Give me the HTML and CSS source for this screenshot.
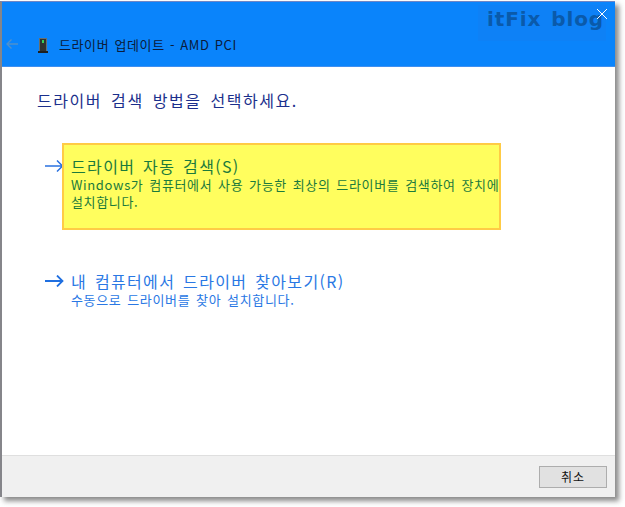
FILE: index.html
```html
<!DOCTYPE html>
<html lang="ko">
<head>
<meta charset="utf-8">
<title>드라이버 업데이트</title>
<link rel="stylesheet" href="styles.css">
</head>
<body>
<div class="window">
  <header class="titlebar">
    <svg class="back" width="12" height="10" viewBox="0 0 12 10"><path d="M12 5H1M5.500 .5 1 5l4.500 4.500" fill="none" stroke="#4f90cc" stroke-width="1.400"/></svg>
    <svg class="device" width="10" height="15" viewBox="0 0 10 15"><rect x="1" y="0" width="8" height="13" fill="#6a6f6c"/><rect x="2" y="1" width="6" height="12" fill="#2f3331"/><rect x="4" y="2" width="2" height="3" fill="#35d05a"/><rect x="0" y="13" width="10" height="2" fill="#1d1f1e"/></svg>
    <span class="title">드라이버 업데이트 - AMD PCI</span>
  </header>
  <div class="watermark"><span class="wm-text">itFix blog</span></div>
  <svg class="close" width="12" height="12" viewBox="0 0 12 12"><path d="M1 1l10 10M11 1 1 11" stroke="#fff" stroke-width="1"/></svg>
  <main class="content">
    <h1 class="heading">드라이버 검색 방법을 선택하세요.</h1>
    <div class="option option-first">
      <svg class="arrow" width="19" height="12" viewBox="0 0 19 12"><path d="M0 6h17.500M12 .5 17.500 6 12 11.500" fill="none" stroke="#2a72e0" stroke-width="1.500"/></svg>
      <div class="highlight">
        <div class="opt-title green">드라이버 자동 검색(S)</div>
        <div class="opt-desc green">Windows가 컴퓨터에서 사용 가능한 최상의 드라이버를 검색하여 장치에<br>설치합니다.</div>
      </div>
    </div>
    <div class="option option-second">
      <svg class="arrow" width="19" height="12" viewBox="0 0 19 12"><path d="M0 6h17.500M12 .5 17.500 6 12 11.500" fill="none" stroke="#1f6fe0" stroke-width="1.800"/></svg>
      <div class="plain">
        <div class="opt-title blue">내 컴퓨터에서 드라이버 찾아보기(R)</div>
        <div class="opt-desc blue">수동으로 드라이버를 찾아 설치합니다.</div>
      </div>
    </div>
  </main>
  <footer class="footer">
    <button class="cancel" type="button">취소</button>
  </footer>
</div>
</body>
</html>
```

FILE: styles.css
```css
* { box-sizing: border-box; }
html, body { margin: 0; padding: 0; background: #fff; }
body {
  width: 625px;
  height: 507px;
  overflow: hidden;
  font-family: "Noto Sans CJK KR", "Noto Sans", sans-serif;
}
.window {
  position: relative;
  width: 615px;
  height: 496px;
  margin-top: 1px;
  display: flex;
  flex-direction: column;
  background: #fff;
  border-left: 2px solid #85858a;
  border-top: 1px solid #6f86c4;
  box-shadow: 4px 4px 5px rgba(60, 60, 60, .6);
}
.titlebar {
  height: 65px;
  flex: none;
  display: flex;
  align-items: flex-end;
  padding: 0 0 13px 4px;
  background: #0a84fb;
  border-bottom: 1px solid #3f8ff0;
}
.back { margin-right: 20px; margin-bottom: 4px; }
.device { margin-right: 11px; }
.title {
  font-size: 13px;
  line-height: 16px;
  color: #0b1b3a;
  letter-spacing: .6px;
  word-spacing: 1px;
  white-space: nowrap;
}
.watermark {
  position: absolute;
  left: 476px;
  top: 3px;
  width: 128px;
  height: 36px;
  background: rgba(40, 110, 220, .14);
}
.wm-text {
  display: block;
  margin: 0 0 0 9px;
  font: bold 20px/28px "DejaVu Sans", sans-serif;
  color: #0a5aaa;
  letter-spacing: .9px;
  word-spacing: 2px;
  white-space: nowrap;
}
.close { position: absolute; right: 7px; top: 6px; }
.content { flex: 1; padding: 21px 0 0 35px; }
.heading {
  margin: 0;
  font-size: 16px;
  line-height: 24px;
  font-weight: 400;
  color: #1b2f8c;
  letter-spacing: 1.550px;
  word-spacing: 3px;
  white-space: nowrap;
}
.option { display: flex; }
.option-first { margin: 31px 0 0 8px; }
.option-second { margin: 38px 0 0 8px; }
.arrow { flex: none; margin-top: 17px; }
.highlight {
  width: 439px;
  height: 87px;
  padding: 11px 0 0 7px;
  margin-left: -2px;
  background: #fffe5e;
  border: 2px solid #ffcb45;
}
.option-second .arrow { margin-top: 7px; }
.plain { padding: 3px 0 0 7px; }
.opt-title {
  font-size: 16px;
  line-height: 20px;
  letter-spacing: 1.350px;
  word-spacing: 2px;
  white-space: nowrap;
}
.opt-desc {
  font-size: 13px;
  line-height: 17px;
  letter-spacing: .65px;
  word-spacing: 1.500px;
  white-space: nowrap;
}
.green { color: #1b7a3c; }
.blue { color: #2a78e4; }
.footer {
  height: 42px;
  flex: none;
  display: flex;
  justify-content: flex-end;
  align-items: flex-start;
  padding: 10px 8px 0 0;
  background: #f0f0f0;
  border-top: 1px solid #dfdfdf;
}
.cancel {
  width: 68px;
  height: 22px;
  padding: 0;
  font: 12px/18px "Noto Sans CJK KR", sans-serif;
  letter-spacing: 1px;
  color: #111;
  background: #e1e1e1;
  border: 1px solid #adadad;
}
```
